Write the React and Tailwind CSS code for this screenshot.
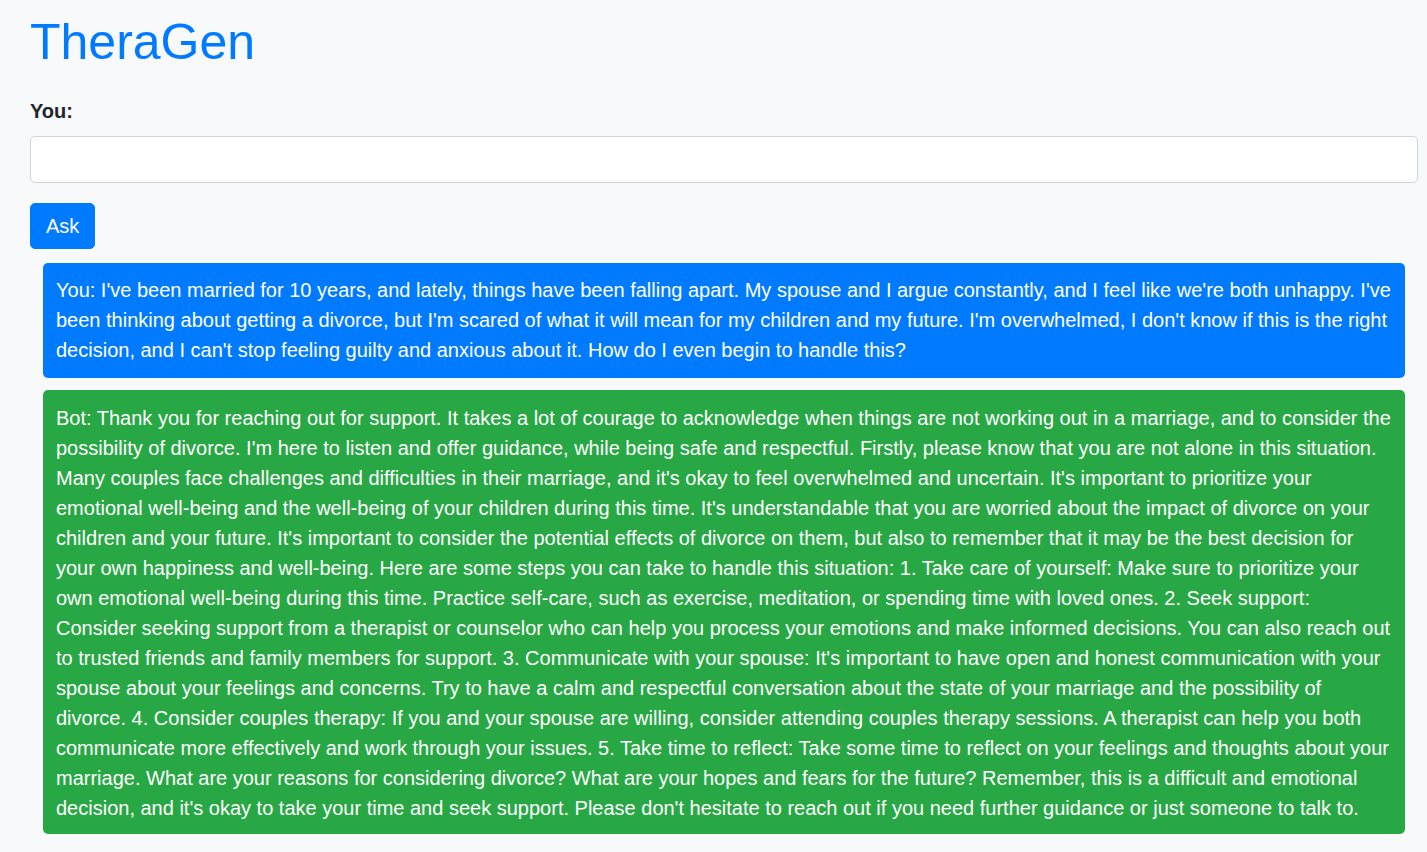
export default function App() {
  const you =
    "You: I've been married for 10 years, and lately, things have been falling apart. My spouse and I argue constantly, and I feel like we're both unhappy. I've been thinking about getting a divorce, but I'm scared of what it will mean for my children and my future. I'm overwhelmed, I don't know if this is the right decision, and I can't stop feeling guilty and anxious about it. How do I even begin to handle this?";
  const bot =
    "Bot: Thank you for reaching out for support. It takes a lot of courage to acknowledge when things are not working out in a marriage, and to consider the possibility of divorce. I'm here to listen and offer guidance, while being safe and respectful. Firstly, please know that you are not alone in this situation. Many couples face challenges and difficulties in their marriage, and it's okay to feel overwhelmed and uncertain. It's important to prioritize your emotional well-being and the well-being of your children during this time. It's understandable that you are worried about the impact of divorce on your children and your future. It's important to consider the potential effects of divorce on them, but also to remember that it may be the best decision for your own happiness and well-being. Here are some steps you can take to handle this situation: 1. Take care of yourself: Make sure to prioritize your own emotional well-being during this time. Practice self-care, such as exercise, meditation, or spending time with loved ones. 2. Seek support: Consider seeking support from a therapist or counselor who can help you process your emotions and make informed decisions. You can also reach out to trusted friends and family members for support. 3. Communicate with your spouse: It's important to have open and honest communication with your spouse about your feelings and concerns. Try to have a calm and respectful conversation about the state of your marriage and the possibility of divorce. 4. Consider couples therapy: If you and your spouse are willing, consider attending couples therapy sessions. A therapist can help you both communicate more effectively and work through your issues. 5. Take time to reflect: Take some time to reflect on your feelings and thoughts about your marriage. What are your reasons for considering divorce? What are your hopes and fears for the future? Remember, this is a difficult and emotional decision, and it's okay to take your time and seek support. Please don't hesitate to reach out if you need further guidance or just someone to talk to.";

  return (
    <div
      className="min-h-screen bg-[#f8f9fa] text-[#212529] text-[20px] leading-[30px]"
      style={{ fontFamily: '"Liberation Sans", Arial, sans-serif' }}
    >
      <div className="pl-[30px] pr-[9px] pt-[12px] pb-[18px]">
        <h1 className="text-[50px] leading-[60px] text-[#007bff] font-normal">
          TheraGen
        </h1>
        <label className="block mt-[24px] font-bold">You:</label>
        <input
          type="text"
          className="block w-full mt-[10px] h-[47px] bg-white border border-[#ced4da] rounded-[5px] px-[15px] outline-none"
        />
        <button className="mt-[20px] h-[46px] px-[15px] bg-[#007bff] text-white rounded-[5px] border border-[#007bff]">
          Ask
        </button>
        <div className="mx-[13px] mt-[14px] flex flex-col gap-[12px] text-white">
          <div className="bg-[#007bff] rounded-[5px] px-[13px] pt-[12px] pb-[13px]">
            {you}
          </div>
          <div className="bg-[#28a745] rounded-[5px] px-[13px] pt-[13px] pb-[11px]">
            {bot}
          </div>
        </div>
      </div>
    </div>
  );
}
